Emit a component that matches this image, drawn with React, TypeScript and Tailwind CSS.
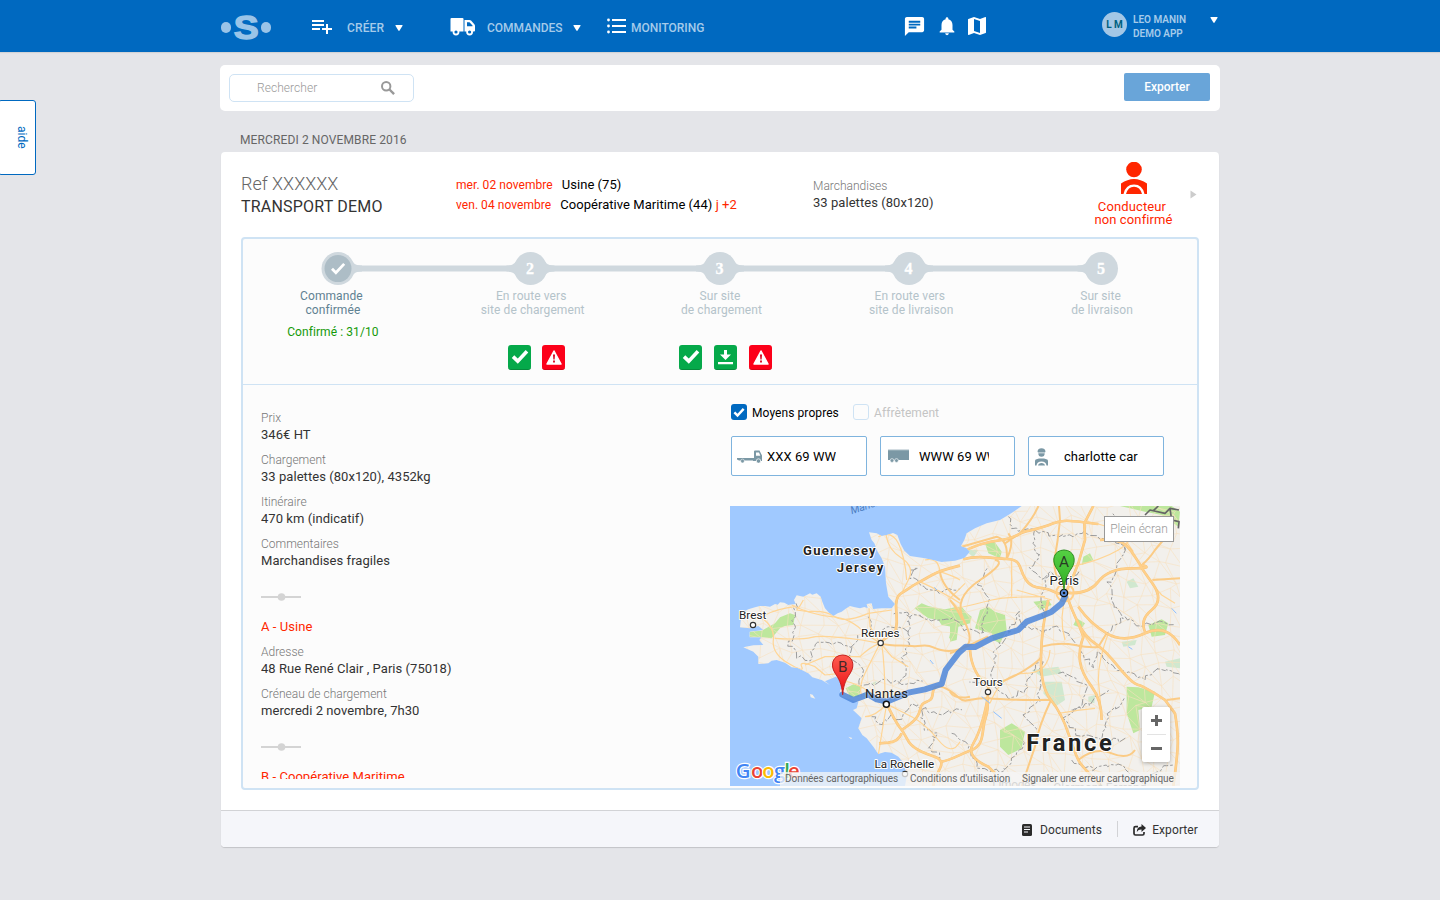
import type { ReactNode } from "react";
import { MdChat, MdNotifications, MdMap } from "react-icons/md";

const Caret = ({ className = "" }: { className?: string }) => (
  <svg className={className} width="8" height="6" viewBox="0 0 8 6">
    <path d="M.3.6Q.3 0 1 0h6q.7 0 .7.6L4.600 5.600Q4 6.300 3.400 5.600Z" fill="#fff" />
  </svg>
);

function Header() {
  return (
    <header className="h-[52px] bg-[#0069c0] shadow-[0_1px_1px_rgba(0,0,0,0.08)]">
      <div className="mx-auto flex h-full w-[1000px] items-start text-[12px] font-medium text-[#a5cbea]">
        <div className="flex h-[52px] w-[51px] items-center justify-between pt-[3px]">
          <i className="ml-px h-[11px] w-[10px] rounded-full bg-[#9ac4e8]" />
          <span className="flex h-[52px] scale-x-110 items-center pb-[1px] font-['Liberation_Sans',sans-serif] text-[34px] leading-none font-bold text-[#9ac4e8] [-webkit-text-stroke:1.4px_#9ac4e8]">S</span>
          <i className="h-[11px] w-[10px] rounded-full bg-[#9ac4e8]" />
        </div>
        <svg className="mt-[14px] ml-[39px] shrink-0" width="24" height="24" viewBox="0 0 24 24" fill="#fff">
          <path d="M14 10H2v2h12v-2zm0-4H2v2h12V6zm4 8v-4h-2v4h-4v2h4v4h2v-4h4v-2h-4zM2 16h8v-2H2v2z" />
        </svg>
        <span className="mt-[18px] ml-[13px] w-[48px] leading-[20px] tracking-[0.15px]">CRÉER</span>
        <Caret className="mt-[25px]" />
        <svg className="mt-[17px] ml-[47px] shrink-0" width="26" height="19" viewBox="0 0 26 19">
          <path fill="#fff" d="M1.500 1h11q1 0 1 1v12.500h-13V2q0-1 1-1Z" />
          <path fill="#fff" d="M14.500 3h5q1 0 1.800.8l3 3.400q.7.800.7 1.800v4.500q0 1-1 1h-9.500Z" />
          <path fill="#0069c0" d="M17 5.300h2.500l3 3.200v.8H17Z" />
          <circle cx="6" cy="15" r="2.500" fill="#0069c0" stroke="#fff" strokeWidth="1.800" />
          <circle cx="19.600" cy="15" r="2.500" fill="#0069c0" stroke="#fff" strokeWidth="1.800" />
        </svg>
        <span className="mt-[18px] ml-[11px] w-[86px] leading-[20px]">COMMANDES</span>
        <Caret className="mt-[25px]" />
        <svg className="mt-[18px] ml-[26px] shrink-0" width="19" height="16" viewBox="0 0 19 16" fill="#fff">
          <path d="M5 1h14v2H5zM5 7h14v2H5zM5 13h14v2H5z" />
          <circle cx="1.500" cy="2" r="1.400" />
          <circle cx="1.500" cy="8" r="1.400" />
          <circle cx="1.500" cy="14" r="1.400" />
        </svg>
        <span className="mt-[18px] ml-[5px] w-[272px] leading-[20px] tracking-[-0.02px]">MONITORING</span>
        <MdChat className="mt-[15px] shrink-0 text-white" size={23} />
        <MdNotifications className="mt-[15px] ml-[10px] shrink-0 text-white" size={22} />
        <MdMap className="mt-[14px] ml-[7px] shrink-0 text-white" size={24} />
        <div className="mt-[12px] ml-[113px] flex h-[25px] w-[25px] items-center justify-center rounded-full bg-[#a3c7e6] text-[10px] font-bold text-[#00607f]">L M</div>
        <div className="mt-[13px] ml-[6px] w-[78px] text-[10px] leading-[14px] font-semibold whitespace-nowrap">
          <div>LEO MANIN</div>
          <div>DEMO APP</div>
        </div>
        <Caret className="mt-[17px] -ml-px" />
      </div>
    </header>
  );
}

const CheckMark = ({ size, className = "" }: { size: number; className?: string }) => (
  <svg className={className} width={size} height={size} viewBox="0 0 16 16">
    <path d="m1.800 8.600 4.200 4L14.200 3.800" fill="none" stroke="#fff" strokeWidth="3.200" />
  </svg>
);

function StatusBadge({ kind }: { kind: "check" | "download" | "alert" }) {
  const tone = kind === "alert" ? "bg-[#fc0019] border-[#d60015]" : "bg-[#05a94a] border-[#068a3c]";
  return (
    <span className={`flex h-[25px] w-[23px] items-center justify-center rounded-[3px] border-b ${tone}`}>
      {kind === "check" && <CheckMark size={18} className="mb-[2px]" />}
      {kind === "download" && (
        <svg width="15" height="16" viewBox="0 0 15 16" fill="#fff">
          <path d="M6 1h3v4.500h4L7.500 11 2 5.500h4ZM0 13h15v2.200H0Z" />
        </svg>
      )}
      {kind === "alert" && (
        <svg width="16" height="15" viewBox="0 0 16 15">
          <path d="M8 1 15 14H1Z" fill="#fff" stroke="#fff" strokeWidth="1.500" strokeLinejoin="round" />
          <path d="M7 4.500h2l-.4 5H7.400ZM7.100 10.500h1.800v1.900H7.100Z" fill="#d4001a" />
        </svg>
      )}
    </span>
  );
}

const stepX = [95, 287.5, 477, 666, 858.5];

function StepTrack() {
  return (
    <svg className="block" width="954" height="36" viewBox="0 0 954 36">
      <path d="M96 17.600H859" stroke="#cfd8de" strokeWidth="6" />
      {stepX.map((x, i) => (
        <g key={x} fill="#cfd8de" transform="translate(0 -.4)">
          <circle cx={x} cy="18" r="16.500" />
          {i > 0 && <path d={`M${x - 10} 5C${x - 15} 12 ${x - 16} 15 ${x - 24} 15v6C${x - 16} 21 ${x - 15} 24 ${x - 10} 31Z`} />}
          {i < 4 && <path d={`M${x + 10} 5C${x + 15} 12 ${x + 16} 15 ${x + 24} 15v6C${x + 16} 21 ${x + 15} 24 ${x + 10} 31Z`} />}
          {i > 0 && (
            <text x={x - 0.5} y="23.400" textAnchor="middle" className="font-['Liberation_Serif',serif] text-[16px] font-bold" fill="#fff" stroke="#fff" strokeWidth=".3">
              {i + 1}
            </text>
          )}
        </g>
      ))}
      <circle cx="95" cy="17.600" r="13.500" fill="#adbdc6" />
      <path d="m89 17.800 3.900 3.900 8.300-8.800" fill="none" stroke="#fff" strokeWidth="2.800" />
    </svg>
  );
}

function StepLabel({ top, bottom, shift, active, children }: { top: string; bottom: string; shift?: string; active?: boolean; children?: ReactNode }) {
  return (
    <div className={`flex w-[190px] flex-col items-center text-[12px] leading-[14px] tracking-[0.08px] ${active ? "text-[#5f8192]" : "text-[#b4c3ca]"} ${shift ?? ""}`}>
      <span className="mr-[3px]">{top}</span>
      <span>{bottom}</span>
      {children}
    </div>
  );
}

function Field({ label, value }: { label: string; value: string }) {
  return (
    <div className="mb-[8px]">
      <div className="pt-px text-[12px] leading-[17px] font-light text-[#777]">{label}</div>
      <div className="-mt-px text-[13px] leading-[17px] tracking-[0.05px] text-[#333]">{value}</div>
    </div>
  );
}

const Separator = () => (
  <svg className="mt-[24px] mb-[17px] block" width="40" height="8" viewBox="0 0 40 8">
    <path d="M0 4h40" stroke="#d4d4d4" strokeWidth="2" />
    <circle cx="20.500" cy="4" r="3.800" fill="#d4d4d4" />
  </svg>
);

const coast =
  "M890 18L870 32L850 45L825 60L785 70L750 85L725 100L718 120L708 138L725 145L735 155L718 174L690 182L650 186L600 175L555 168L538 152L527 132L517 105L504 99L488 104L470 108L455 100L432 97L440 120L448 130L458 155L470 175L480 200L483 250L490 290L510 312L500 325L470 325L444 327L440 310L425 312L428 325L418 321L405 325L390 322L375 318L362 326L350 335L338 340L325 348L312 338L300 325L292 305L287 290L275 280L262 284L255 280L235 290L215 286L207 300L212 312L190 315L178 308L165 307L158 314L150 312L135 320L120 318L105 318L90 322L70 328L50 338L45 382L75 385L100 378L115 390L74 395L74 412L110 412L103 420L115 435L85 436L55 442L85 455L100 470L100 492L130 490L140 482L155 480L180 488L200 502L218 504L235 512L250 520L262 532L290 540L315 555L300 544L332 530L358 545L345 572L350 590L380 600L400 606L395 625L384 630L400 645L410 655L400 685L412 705L425 715L445 740L460 762L480 756L500 758L520 770L537 790L545 830L540 858L1365 858L1365 18Z";

const mainRoads = [
  "M705 197C680 203 650 212 635 218S605 235 585 245S545 270 528 280S512 315 514 335S518 365 512 392L475 420L467 430",
  "M485 612C500 640 510 665 530 690S545 735 590 755S640 770 648 785S630 820 625 858",
  "M530 690C560 670 580 655 585 630S600 610 615 600S615 570 635 560",
  "M650 785C680 780 700 765 740 750S770 690 780 660S790 610 785 595",
  "M530 700Q520 725 490 728L462 730",
  "M715 155C750 135 790 125 830 120S880 100 900 95S950 85 985 70S1050 65 1120 72",
  "M715 178C760 165 800 175 845 177S880 200 900 235S950 260 975 270S1000 285 1020 278",
  "M1105 18L1078 70L1080 120L1060 190L1040 240L1022 278",
  "M1022 278Q1090 285 1120 245T1220 205T1250 195",
  "M1125 120Q1190 110 1220 155T1248 200T1282 250T1280 330T1262 400",
  "M1022 278Q1040 330 1060 370T1110 430T1180 500T1240 555T1320 600L1350 640",
  "M1060 320Q1095 370 1145 400T1260 400T1365 435",
  "M1060 370L1075 410Q1060 450 1065 485T1100 560T1130 660",
  "M970 300Q950 380 948 470T978 600T1030 700T1060 780T1130 858",
  "M735 450Q740 520 790 560L788 595Q770 690 745 730T790 800L810 820",
  "M1350 640Q1360 700 1358 740T1345 858",
];
const trunkRoads = [
  "M467 430C500 440 530 435 560 438S600 430 625 442S680 455 705 448S760 420 790 410",
  "M635 560C655 555 690 580 705 596S750 590 790 595S900 600 975 600",
  "M845 177Q850 120 815 110L710 140M845 177Q870 125 850 100",
  "M1002 18L1005 60L998 120L990 170Q980 220 1018 265",
  "M940 18Q925 55 885 100L840 130",
  "M1250 195Q1270 180 1290 150L1315 120M1282 240L1365 235",
  "M950 440Q1000 425 1050 435T1120 440L1145 400",
  "M978 600Q940 680 930 740L890 858",
  "M675 460Q690 455 720 440T716 360T765 240T810 180",
  "M675 575Q690 600 735 590",
  "M705 300Q650 260 645 215",
  "M1365 595L1325 600",
  "M1060 780Q1110 740 1160 760T1230 750",
  "M790 560Q860 535 900 510T950 470M675 300Q700 330 712 360",
];
const midRoads = [
  "M210 320Q160 325 120 345L84 360M200 315Q260 345 320 350T420 400L465 430",
  "M105 350Q150 380 145 420T190 490T230 500T270 500L300 525L345 520",
  "M235 300Q225 320 215 330L250 335Q300 330 330 350T430 340L500 330",
  "M150 415Q230 420 260 412T410 420L465 430M465 430Q440 480 420 520T410 590",
  "M465 430Q435 440 405 470L300 470L240 495M470 430Q480 500 480 600M467 430L500 470L550 500",
  "M432 325L435 380L465 430M345 540Q400 550 440 580L485 612",
  "M485 612Q450 650 420 650M485 612Q470 700 460 765M485 612Q520 630 560 650T640 720T705 725",
  "M483 105Q490 150 530 175T550 240L530 280M460 110Q500 90 520 130T545 240",
  "M645 215Q640 170 600 180M645 215Q690 230 705 240M585 245Q660 280 705 310",
  "M675 300Q720 340 715 370M795 610Q830 520 900 520T975 450",
  "M875 270Q910 280 980 300M675 330Q760 310 800 300T960 290",
  "M1040 200Q1130 180 1180 150T1230 70M1120 72L1180 90L1225 155",
  "M1280 250L1310 285L1350 310M1150 400Q1120 480 1120 540L1130 650",
  "M1020 420Q1000 350 1025 280M1100 440Q1050 370 1022 280",
  "M860 180Q860 250 860 290M720 250L670 300M1000 640Q1060 630 1110 625",
];

const borders: [number, number][][] = [
  [[213, 310], [205, 350], [208, 410], [190, 425], [215, 470], [255, 485], [262, 440], [300, 425], [380, 440], [400, 410]],
  [[380, 440], [375, 480], [410, 495], [405, 560], [440, 555], [470, 540], [530, 550], [590, 545]],
  [[430, 350], [440, 395], [480, 385], [550, 390], [550, 340], [510, 345]],
  [[550, 390], [555, 430], [530, 480], [545, 510], [520, 550]],
  [[555, 210], [575, 200], [560, 230], [590, 260], [625, 275], [700, 270]],
  [[545, 345], [580, 350], [640, 360], [690, 355], [720, 390], [770, 400]],
  [[590, 630], [600, 690], [640, 700], [610, 740], [650, 770]],
  [[440, 650], [470, 680], [495, 650], [520, 660], [560, 615], [640, 640], [705, 630]],
  [[850, 50], [860, 90], [930, 90], [925, 150], [950, 160], [920, 200], [960, 240], [970, 215], [1010, 235], [1060, 220]],
  [[930, 90], [1010, 110], [1080, 100], [1160, 120], [1200, 150], [1150, 250], [1170, 320], [1200, 350], [1150, 400]],
  [[970, 220], [950, 300], [960, 390], [900, 380], [880, 340], [850, 400], [810, 460], [800, 540], [740, 545]],
  [[950, 400], [1000, 380], [1030, 400], [1100, 500], [1120, 460], [1160, 500], [1260, 540]],
  [[810, 560], [850, 590], [900, 570], [930, 500], [950, 480], [940, 600], [900, 650], [940, 690]],
  [[1000, 520], [1050, 530], [1090, 570], [1060, 620], [1020, 650], [1050, 700], [1130, 720], [1200, 720]],
  [[1040, 630], [1100, 610], [1150, 570]],
  [[1200, 350], [1240, 380], [1310, 360], [1340, 380]],
  [[1200, 150], [1170, 40]],
  [[680, 700], [720, 720], [760, 800], [830, 820], [880, 760], [900, 720]],
  [[1040, 780], [1110, 810], [1180, 790], [1250, 850], [1340, 790]],
  [[770, 400], [790, 300], [760, 250], [790, 200]],
  [[1260, 540], [1300, 500], [1365, 530]],
  [[1130, 720], [1150, 640], [1200, 600]],
];

const noise = (n: number) => {
  const s = Math.sin(n * 12.9898) * 43758.5453;
  return s - Math.floor(s);
};

function ragged(points: [number, number][], seed: number) {
  let d = `M${points[0][0]} ${points[0][1]}`;
  for (let i = 1; i < points.length; i++) {
    const [x0, y0] = points[i - 1];
    const [x1, y1] = points[i];
    const parts = Math.max(2, Math.round(Math.hypot(x1 - x0, y1 - y0) / 11));
    for (let k = 1; k <= parts; k++) {
      const t = k / parts;
      const j = seed * 101 + i * 17 + k;
      d += `L${(x0 + (x1 - x0) * t + noise(j) * 14 - 7).toFixed(1)} ${(y0 + (y1 - y0) * t + noise(j + 0.5) * 14 - 7).toFixed(1)}`;
    }
  }
  return d;
}

const greens = [
  "M74 395L110 392L150 370L165 352L195 340L210 345L205 375L180 378L165 385L140 415L110 412L74 412Z",
  "M568 325L590 310L610 318L640 325L660 328L700 320L705 345L698 380L690 415L672 415L680 380L650 375L640 360L610 355Z",
  "M362 565L385 553L410 560L402 590L375 592Z",
  "M675 325L710 320L725 338L740 350L735 370L700 380L695 420L675 425Z",
  "M765 330L790 320L810 335L840 345L845 390L825 430L805 420L800 400L780 395L750 385Z",
  "M780 130L805 120L830 155L825 175L790 160Z",
  "M1205 560L1240 562L1290 575L1280 620L1240 630L1245 690L1225 700L1205 640Z",
  "M825 690L860 670L900 695L890 745L850 765L825 740Z",
  "M1270 375L1310 358L1330 370L1320 405L1280 410Z",
  "M1075 170L1095 160L1105 180L1070 195ZM1055 355L1080 370L1070 385L1045 375ZM925 305L970 300L980 315L945 330Z",
  "M1185 18L1340 18L1365 35L1360 80L1310 45L1260 35Z",
];
const paleGreens = [
  "M920 510L1000 500L1010 520L950 530ZM960 545L1010 545L1020 600L990 620L955 580Z",
  "M1205 245L1225 235L1240 260L1215 265ZM1190 425L1235 420L1230 435L1195 440ZM1320 485L1365 475L1365 505L1325 500Z",
  "M1090 590L1110 585L1108 610L1090 605ZM990 720L1020 730L1010 745ZM720 150L760 150L745 172ZM440 550L455 543L450 555Z",
];

function localRoads() {
  const at = (c: number, r: number) => [c * 44 + noise(c * 7.1 + r * 3.7) * 36, r * 44 + noise(c * 2.3 + r * 9.1 + 50) * 36];
  const out: string[] = [];
  for (let c = 0; c < 32; c++) {
    for (let r = 0; r < 20; r++) {
      const [x, y] = at(c, r);
      const [a, b] = at(c + 1, r);
      const [d, e] = at(c, r + 1);
      const [f, g] = at(c + 1, r + 1);
      out.push(`M${x} ${y}L${a} ${b}M${x} ${y}L${d} ${e}`);
      if ((c * 7 + r * 3) % 2) out.push(`M${x} ${y}L${f} ${g}`);
    }
  }
  return out.join("");
}

const towns: [string, number, number, number, number][] = [
  ["Brest", 83, 357, 84, 375],
  ["Rennes", 466, 411, 467, 429],
  ["Tours", 789, 558, 789, 576],
  ["La Rochelle", 538, 804, 540, 822],
];

const Pin = ({ x, y, letter, from, to, edge }: { x: number; y: number; letter: string; from: string; to: string; edge: string }) => (
  <g transform={`translate(${x} ${y})`}>
    <linearGradient id={`pin${letter}`} x1="0" x2="0" y1="0" y2="1">
      <stop offset="0" stopColor={from} />
      <stop offset="1" stopColor={to} />
    </linearGradient>
    <path d="M0 0C-3-35-12-48-23-65C-38-88-31-118 0-119C31-118 38-88 23-65C12-48 3-35 0 0Z" fill={`url(#pin${letter})`} stroke={edge} strokeWidth="3" />
    <text y="-67" textAnchor="middle" fontSize="46" fill="#222" fillOpacity=".85">{letter}</text>
  </g>
);

function RouteMap() {
  return (
    <div className="relative h-[280px] w-[450px] overflow-hidden bg-[#a0c9ff]">
      <svg className="block font-['Roboto',sans-serif]" width="450" height="280" viewBox="15 18 1350 840">
        <clipPath id="land"><path d={coast} /></clipPath>
        <path d={coast} fill="#f2f0ec" />
        <path d="M255 582l8 2l8 12l-14-4ZM370 710l12 4l-4 4Z" fill="#f2f0ec" />
        <g clipPath="url(#land)" fill="none" strokeLinejoin="round">
          {paleGreens.map((d) => <path key={d} d={d} fill="#d0e8cf" />)}
          {greens.map((d) => <path key={d} d={d} fill="#bde79d" />)}
          <path d={localRoads()} stroke="#f9e0c0" strokeWidth="1.800" />
          {borders.map((points, i) => <path key={i} d={ragged(points, i + 1)} stroke="#9c9c9c" strokeWidth="3" strokeDasharray="20 6 8 6" />)}
          {midRoads.map((d) => <path key={d} d={d} stroke="#ffd595" strokeWidth="3.600" />)}
          {trunkRoads.map((d) => <path key={d} d={d} stroke="#fbcb85" strokeWidth="6" />)}
          {mainRoads.map((d) => <path key={d} d={d} stroke="#f7c47c" strokeWidth="8" />)}
          {mainRoads.map((d) => <path key={d} d={d} stroke="#ffd08a" strokeWidth="5.500" />)}
          <path d="M1260 45L1275 30L1320 40L1335 25L1340 60L1362 65L1360 85M1300 18L1285 32M1335 25L1362 30" stroke="#666" strokeWidth="5" />
          <circle cx="1020" cy="278" r="26" stroke="#ffcf8a" strokeWidth="6" />
        </g>
        <g stroke="#8ec0ff" strokeWidth="3" fill="none">
          <path d="M628 262l8 8M615 480l10 12M770 590l25 20M805 635l25 20M1340 325l14 15M1210 440l12 8" />
        </g>
        <path d="M352 584L385 600L430 583L455 598L485 605L550 578L600 568L650 552L662 510L700 460L722 440L750 441L800 415L840 402L880 390L905 365L950 348L980 335L1010 310L1020 290" fill="none" stroke="#4e86d9" strokeOpacity=".85" strokeWidth="18" strokeLinejoin="round" strokeLinecap="round" />
        <g fill="#222" stroke="#fff" strokeWidth="6" paintOrder="stroke" strokeLinejoin="round">
          {towns.map(([name, x, y]) => <text key={name} x={x} y={y} fontSize="35" textAnchor="middle">{name}</text>)}
          <text x="485" y="593" fontSize="39" textAnchor="middle" letterSpacing="1" strokeOpacity=".3">Nantes</text>
          <text x="1018" y="256" fontSize="39" textAnchor="middle">Paris</text>
          <text x="234" y="166" fontSize="39" fontWeight="700" textLength="218">Guernesey</text>
          <text x="335" y="217" fontSize="39" fontWeight="700" textLength="140">Jersey</text>
          <text x="904" y="754" fontSize="71" fontWeight="700" textLength="256">France</text>
        </g>
        {towns.map(([name, , , x, y]) => <circle key={name} cx={x} cy={y} r="8" fill="#fff" stroke="#333" strokeWidth="3.500" />)}
        <circle cx="484" cy="613" r="9" fill="#fff" stroke="#111" strokeWidth="4.500" />
        <text transform="translate(380 43) rotate(-18)" fontSize="32" fontStyle="italic" fill="#4e80c2">Manche</text>
        <circle cx="1017" cy="279" r="11" fill="#5a8fe0" stroke="#111" strokeWidth="4" />
        <circle cx="1017" cy="279" r="4" fill="#111" />
        <Pin x={353} y={584} letter="B" from="#ff5c50" to="#e80d12" edge="#c5221f" />
        <Pin x={1017} y={269} letter="A" from="#55d043" to="#31ae25" edge="#2e8c22" />
        <text y="833" fontSize="61" stroke="#fff" strokeWidth="7" paintOrder="stroke" className="font-['Open_Sans',sans-serif] font-semibold">
          <tspan x="32" fill="#4285f4">G</tspan>
          <tspan x="78" fill="#ea4335">o</tspan>
          <tspan x="112" fill="#fbbc05">o</tspan>
          <tspan x="147" fill="#4285f4">g</tspan>
          <tspan x="178" fill="#34a853">l</tspan>
          <tspan x="189" fill="#ea4335">e</tspan>
        </text>
        <g fill="#777" fontSize="36"><text x="802" y="866" textLength="132">Limoges</text><text x="985" y="876">Clermont-Ferrand</text></g>
      </svg>
      <div className="absolute top-[10px] right-[6px] flex h-[26px] w-[70px] items-center justify-center border border-[#999] bg-white text-[12px] font-light text-[#999]">Plein écran</div>
      <div className="absolute right-[10px] bottom-[24px] flex h-[55px] w-[28px] flex-col items-center rounded-[2px] bg-white shadow-[0_1px_4px_rgba(0,0,0,0.3)]">
        <svg width="28" height="55" viewBox="0 0 28 55"><path d="M9 13.500h11M14.500 8v11M9 41.500h11" stroke="#666" strokeWidth="3" /><path d="M5 27.500h19" stroke="#e3e3e3" /></svg>
      </div>
      <div className="absolute right-0 bottom-0 flex h-[14px] w-[400px] items-center bg-[#f5f5f5]/75 pb-[2px] text-[10px] font-normal tracking-[-0.05px] whitespace-nowrap text-[#666]">
        <span className="ml-[5px] w-[125px]">Données cartographiques</span>
        <span className="w-[112px]">Conditions d'utilisation</span>
        <span>Signaler une erreur cartographique</span>
      </div>
    </div>
  );
}

const truckIcon = (
  <svg width="26" height="13" viewBox="0 0 26 13" fill="#7b98a5">
    <path d="M0 8h17V1.500Q17 .5 18 .5h4.500L25 5.500V11H16v-.5H2L0 9.500Z" /><path d="M19 2.500h3l1.300 3.300H19Z" fill="#fff" />
    <circle cx="5.500" cy="11" r="1.900" stroke="#fff" strokeWidth=".5" /><circle cx="21.500" cy="11" r="2.200" stroke="#fff" strokeWidth=".7" />
  </svg>
);
const trailerIcon = (
  <svg width="21" height="14" viewBox="0 0 21 14" fill="#7b98a5">
    <path d="M0 1h21v10H0Z" /><path d="M0 1h21" stroke="#a8bbc4" /><circle cx="4" cy="11.500" r="1.900" stroke="#fff" strokeWidth=".6" /><circle cx="8.500" cy="11.500" r="1.900" stroke="#fff" strokeWidth=".6" />
  </svg>
);
const driverIcon = (
  <svg className="mt-px" width="13" height="18" viewBox="0 0 13 18" fill="#7b98a5">
    <path d="M2.500 3.500Q3 .3 6.500.3T10.500 3.500L10 4.500H3ZM3.300 5.300h6.400q0 3.500-3.200 3.500t-3.200-3.500ZM0 17.500V13q0-1.500 1.500-1.800l2.500-.8h5l2.500.8q1.500.3 1.500 1.800v4.500h-1.500q-.5-4-5-4t-5 4Z" />
    <path d="M3 17.500q.5-2.600 3.500-2.600t3.500 2.600Z" />
  </svg>
);

function Resource({ icon, text, width, pad, gap, clip = "" }: { icon: ReactNode; text: string; width: string; pad: string; gap: string; clip?: string }) {
  return (
    <div className={`flex h-[40px] items-center rounded-[2px] border border-[#7fb4de] bg-white text-[13px] text-black ${width} ${pad} ${gap}`}>
      {icon}
      <span className={`mt-[2px] overflow-hidden tracking-[0.07px] whitespace-nowrap ${clip}`}>{text}</span>
    </div>
  );
}

export default function App() {
  return (
    <div className="relative h-[900px] overflow-hidden bg-[#e4e5e9] font-['Roboto',sans-serif]">
      <Header />
      <aside className="absolute top-[100px] left-[-2px] flex h-[75px] w-[38px] items-center justify-center rounded-[3px] border border-[#0069c0] bg-white pl-[9px] text-[12px] text-[#0069c0]">
        <span className="[writing-mode:vertical-rl]">aide</span>
      </aside>
      <div className="mx-auto w-[1000px]">
        <div className="mt-[13px] flex h-[46px] items-start justify-between rounded-[5px] bg-white pt-[8px] pr-[10px] pl-[9px]">
          <div className="mt-px flex h-[28px] w-[185px] items-center justify-between rounded-[5px] border border-[#cfe3f4] pr-[18px] pl-[27px] text-[12px] font-light tracking-[0.05px] text-[#999]">
            Rechercher
            <svg width="14" height="14" viewBox="0 0 14 14" fill="none" stroke="#999" strokeWidth="2">
              <circle cx="5.200" cy="5.200" r="4.200" />
              <path d="m8.500 8.500 4.600 4.600" strokeWidth="2.400" />
            </svg>
          </div>
          <button className="h-[28px] w-[86px] rounded-[2px] bg-[#69a5d9] text-[12px] font-medium text-white">Exporter</button>
        </div>
        <h2 className="mt-[20px] ml-[20px] h-[21px] text-[12px] leading-[18px] tracking-[0.12px] text-[#666]">MERCREDI 2 NOVEMBRE 2016</h2>
        <main className="mx-px h-[695px] rounded-[4px] bg-white shadow-[0_1px_1px_rgba(0,0,0,0.15)]">
          <div className="flex h-[85px] pl-[20px]">
            <div className="w-[215px] pt-[20px]">
              <div className="text-[18px] leading-[24px] font-light text-[#666]">Ref XXXXXX</div>
              <div className="text-[16px] leading-[22px] tracking-[0.2px] text-[#333]">TRANSPORT DEMO</div>
            </div>
            <div className="w-[357px] pt-[23px] text-[13px] leading-[20px] tracking-[0.05px] text-black">
              <div><span className="mr-[9px] text-[12px] text-[#ff2600]">mer. 02 novembre</span>Usine (75)</div>
              <div><span className="mr-[9px] text-[12px] text-[#ff2600]">ven. 04 novembre</span>Coopérative Maritime (44) <span className="text-[#ff2600]">j +2</span></div>
            </div>
            <div className="w-[264px] pt-[25px]"><Field label="Marchandises" value="33 palettes (80x120)" /></div>
            <div className="flex w-[113px] flex-col items-center pt-[10px] text-[13px] leading-[13px] tracking-[0.12px] text-[#ff2600]">
              <svg className="mb-[6px]" width="26" height="32" viewBox="0 0 26 32" fill="#ff2600">
                <circle cx="13" cy="7.500" r="7.800" />
                <path d="M0 32V21.500Q13 12.500 26 21.500V32H23.500Q21.500 22.500 13 22.500T2.500 32Z" />
                <path d="M5 32Q7 24.800 13 24.800T21 32Z" />
              </svg>
              <span className="mr-[3px]">Conducteur</span>
              <span>non confirmé</span>
            </div>
            <svg className="mt-[38px]" width="7" height="9" viewBox="0 0 7 9"><path d="M.5.500 6.500 4.500.500 8.500Z" fill="#ccc" /></svg>
          </div>

          <section className="ml-[20px] h-[553px] w-[958px] overflow-hidden rounded-[4px] border-2 border-[#cfe3f4] bg-[#fcfcfc]">
            <div className="h-[146px] border-b border-[#cfe3f4] pt-[12px]">
              <StepTrack />
              <div className="mt-[2px] flex">
                <StepLabel active top="Commande" bottom="confirmée" shift="-ml-[5px]">
                  <span className="mt-[8px] text-[12px] text-[#149a09]">Confirmé : 31/10</span>
                </StepLabel>
                <StepLabel top="En route vers" bottom="site de chargement" shift="ml-[10px]">
                  <span className="mt-[28px] ml-[8px] flex gap-[11px]"><StatusBadge kind="check" /><StatusBadge kind="alert" /></span>
                </StepLabel>
                <StepLabel top="Sur site" bottom="de chargement" shift="-ml-[1px]">
                  <span className="mt-[28px] ml-[9px] flex gap-[12px]"><StatusBadge kind="check" /><StatusBadge kind="download" /><StatusBadge kind="alert" /></span>
                </StepLabel>
                <StepLabel top="En route vers" bottom="site de livraison" />
                <StepLabel top="Sur site" bottom="de livraison" shift="ml-[1px]" />
              </div>
            </div>
            <div className="flex h-[403px]">
              <div className="ml-[18px] h-[394px] w-[469px] overflow-hidden pt-[24px]">
                <Field label="Prix" value="346€ HT" />
                <Field label="Chargement" value="33 palettes (80x120), 4352kg" />
                <Field label="Itinéraire" value="470 km (indicatif)" />
                <Field label="Commentaires" value="Marchandises fragiles" />
                <Separator />
                <div className="mb-[8px] text-[13px] leading-[17px] tracking-[0.06px] text-[#ff2600]">A - Usine</div>
                <Field label="Adresse" value="48 Rue René Clair , Paris (75018)" />
                <Field label="Créneau de chargement" value="mercredi 2 novembre, 7h30" />
                <Separator />
                <div className="text-[13px] leading-[17px] tracking-[0.06px] text-[#ff2600]">B - Coopérative Maritime</div>
              </div>
              <div className="pt-[19px]">
                <div className="ml-px flex h-[16px] items-center text-[12px]">
                  <span className="flex h-[16px] w-[16px] items-center justify-center rounded-[3px] bg-[#0069c0]"><CheckMark size={12} className="mb-px" /></span>
                  <span className="mt-[2px] ml-[5px] w-[101px] tracking-[0.08px] text-black">Moyens propres</span>
                  <span className="h-[16px] w-[16px] rounded-[3px] border border-[#cfe3f4]" />
                  <span className="mt-[2px] ml-[5px] tracking-[0.08px] text-[#c4c4c4]">Affrètement</span>
                </div>
                <div className="mt-[16px] ml-px flex gap-[13px]">
                  <Resource icon={truckIcon} text="XXX 69 WW" width="w-[136px]" pad="pl-[5px]" gap="gap-[4px]" />
                  <Resource icon={trailerIcon} text="WWW 69 WWW" width="w-[135px]" pad="pl-[7px]" gap="gap-[10px]" clip="w-[70px]" />
                  <Resource icon={driverIcon} text="charlotte car" width="w-[136px]" pad="pl-[6px]" gap="gap-[16px]" />
                </div>
                <div className="mt-[30px]"><RouteMap /></div>
              </div>
            </div>
          </section>

          <footer className="mt-[20px] flex h-[37px] items-center justify-end rounded-b-[4px] border-t border-[#d2d3d6] bg-[#f5f6fa] pr-[21px] text-[12px] tracking-[0.1px] text-[#333]">
            <svg className="mt-px" width="10" height="12" viewBox="0 0 10 12"><rect width="10" height="12" rx="1.500" fill="#2b2b2b" /><path d="M2 3h6M2 5.500h6M2 8h4" stroke="#f5f6fa" strokeWidth="1.200" /></svg>
            <span className="mt-[2px] ml-[8px]">Documents</span>
            <i className="mx-[15px] h-[16px] w-px bg-[#d2d3d6]" />
            <svg className="mt-px" width="13" height="12" viewBox="0 0 13 12"><path d="M5 2.700H2.500Q1 2.700 1 4.200v5.300Q1 11 2.500 11h7Q11 11 11 9.500V8" fill="none" stroke="#2b2b2b" strokeWidth="1.700" /><path d="M8.500 0 13 4 8.500 8V5.600Q5.500 5.400 3.800 8 3.800 2.800 8.500 2.400Z" fill="#2b2b2b" /></svg>
            <span className="mt-[2px] ml-[6px]">Exporter</span>
          </footer>
        </main>
      </div>
    </div>
  );
}
